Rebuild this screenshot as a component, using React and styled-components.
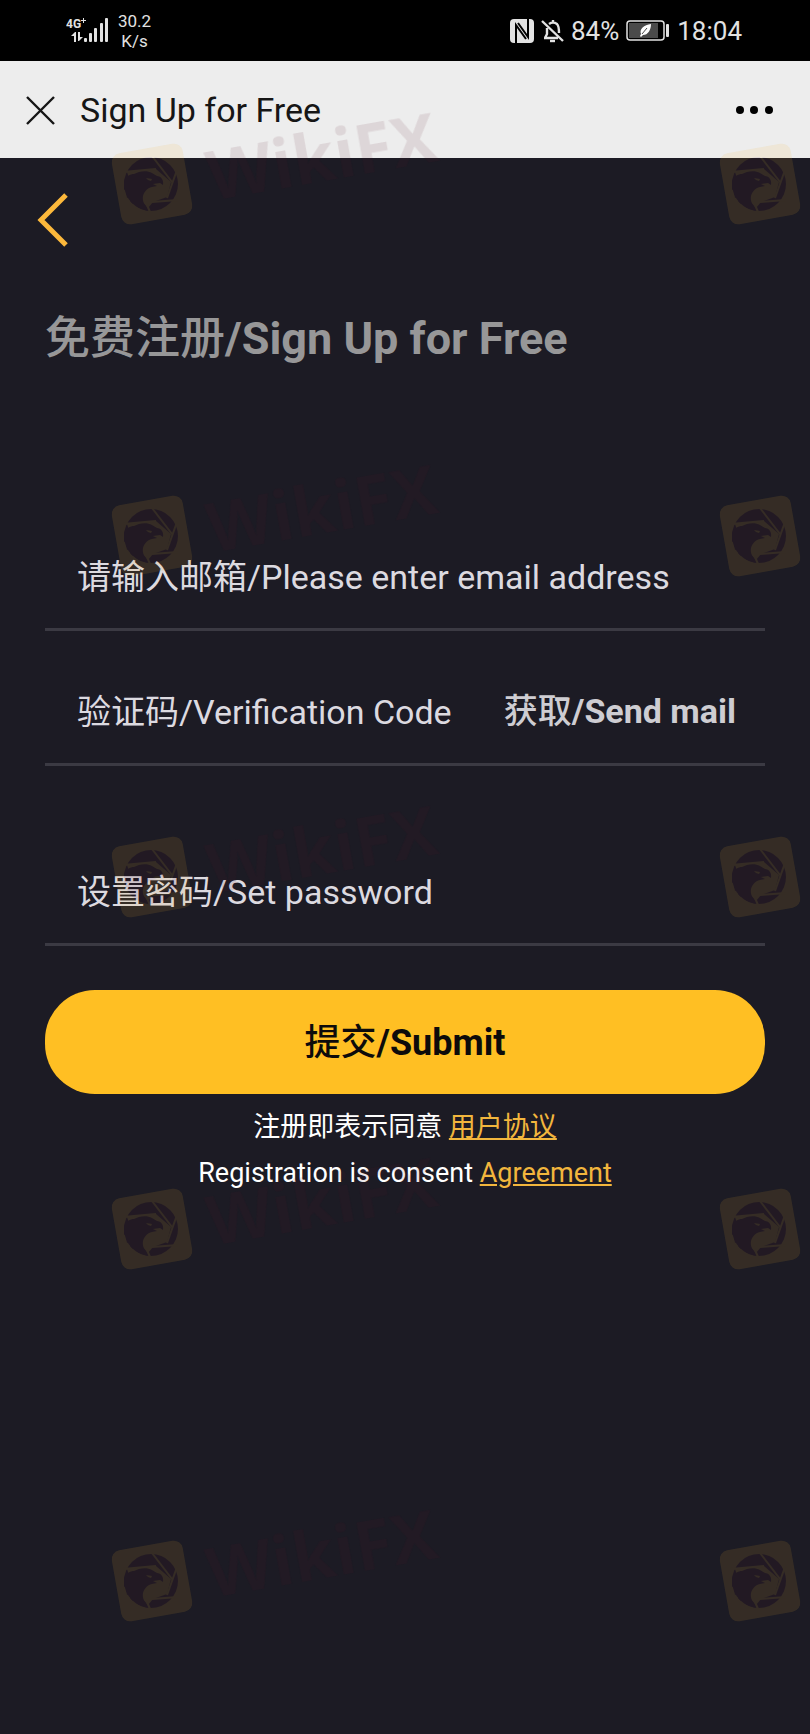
import { useState } from 'react';
import styled, { createGlobalStyle } from 'styled-components';

const GlobalStyle = createGlobalStyle`
  * { box-sizing: border-box; }
  body {
    margin: 0;
    background: #1c1b24;
    font-family: Roboto, 'Noto Sans CJK SC', sans-serif;
  }
  button, input { font-family: inherit; }
`;

const Page = styled.div`
  position: relative;
  min-height: 100vh;
  background: #1c1b24;
  overflow: hidden;
`;

const StatusBar = styled.div`
  display: flex;
  align-items: center;
  justify-content: space-between;
  height: 61px;
  padding: 0 68px 0 66px;
  background: #000;
  color: #e2e2e2;
`;

const StatusGroup = styled.div`
  display: flex;
  align-items: center;
  gap: ${props => props.$gap}px;
`;

const Speed = styled.div`
  font-size: 17px;
  line-height: 20px;
  text-align: center;
`;

const StatusText = styled.span`
  font-size: 26px;
  line-height: 32px;
`;

const TitleBar = styled.header`
  display: flex;
  align-items: center;
  gap: 24px;
  height: 97px;
  padding: 0 37px 0 24px;
  background: #ededed;
  color: #161616;
`;

const Title = styled.h1`
  flex: 1;
  margin: 0;
  font-size: 34px;
  font-weight: 400;
  line-height: 40px;
`;

const IconButton = styled.button`
  display: flex;
  padding: 0;
  border: 0;
  background: none;
  color: inherit;
  cursor: pointer;
`;

const Content = styled.main`
  padding: 32px 45px 0;
`;

const Back = styled(IconButton)`
  margin-left: -9px;
  color: #fcb83b;
`;

const Heading = styled.h2`
  margin: 59px 0 0;
  color: #979798;
  font-size: 45px;
  font-weight: 700;
  line-height: 60px;
`;

const Han = styled.span`
  font-weight: 500;
`;

const Form = styled.form`
  display: flex;
  flex-direction: column;
  margin-top: 156px;
`;

const Field = styled.div`
  display: flex;
  align-items: center;
  height: 106px;
  margin-bottom: ${props => props.$space}px;
  padding: 0 29px 0 32px;
  border-bottom: 3px solid #3b3a43;
`;

const Input = styled.input`
  flex: 1;
  min-width: 0;
  height: 100%;
  padding: 0;
  border: 0;
  outline: 0;
  background: none;
  color: #dcdae0;
  font-size: 34px;
  &::placeholder {
    color: #dcdae0;
    opacity: 1;
  }
`;

const SendMail = styled.button`
  padding: 0 0 6px;
  border: 0;
  background: none;
  color: #cecdd2;
  font-size: 34px;
  font-weight: 700;
  cursor: pointer;
`;

const Submit = styled.button`
  height: 104px;
  padding: 0 0 6px;
  border: 0;
  border-radius: 50px;
  background: #ffbf23;
  color: #0d0b0b;
  font-size: 36px;
  font-weight: 700;
  cursor: pointer;
`;

const Terms = styled.p`
  margin: 10px 0 0;
  color: #fff;
  font-size: 27px;
  line-height: 46px;
  text-align: center;
`;

const Link = styled.a`
  color: #f2b63d;
  text-decoration: underline;
`;

const WatermarkRow = styled.div`
  position: absolute;
  top: ${props => props.$top}px;
  left: 0;
  right: 0;
  display: flex;
  justify-content: space-between;
  padding: 0 9px 0 111px;
  opacity: 0.12;
  pointer-events: none;
`;

const Mark = styled.svg`
  display: block;
  overflow: visible;
  font-family: 'Open Sans', sans-serif;
  font-size: 68px;
  font-weight: 700;
`;

const watermarks = [144, 496, 837, 1189, 1541];

const Logo = ({ label }) => (
  <Mark width="82" height="82" viewBox="0 0 82 82" aria-hidden="true">
    <rect x="5" y="4" width="72" height="72" rx="9" fill="#f0b432" transform="rotate(-10 41 40)" />
    <circle cx="40" cy="40" r="27" fill="#5a1428" />
    {/* shutter blades */}
    <path d="M16 28L45 25L60 38L56 53L42 58L37 64L30 56L20 40Z" fill="#f0b432" />
    <path d="M12 28L45 25M41 12L61 38M66 26L56 54M67 56L41 58M39 68L33 54" stroke="#f0b432" strokeWidth="2" fill="none" />
    {/* eagle */}
    <path d="M13 37C15 32 19 30 23 30C28 27 36 26 41 29L46 32C50 32 53 36 52 41L49 39L42 40L46 42L41 43C36 44 33 48 32 52C31 57 34 62 37 67L31 65L29 60L28 64L25 62L25 56L22 60L19 57L21 51L16 54L15 48L18 43L13 46Z" fill="#5a1428" />
    <path d="M35 34L41 35L40 37L37 36Z" fill="#f0b432" />
    {label && <text x="97" y="67" fill="#5a1428" opacity="0.85" transform="rotate(-10 41 41)">{label}</text>}
  </Mark>
);

const Signal = () => (
  <svg width="43" height="26" viewBox="0 0 43 26" fill="#e2e2e2" aria-hidden="true">
    <text x="0" y="10" fontSize="12" fontWeight="700">4G</text>
    <path d="M17 0h1v2h2v1h-2v2h-1V3h-2V2h2z" />
    <path d="M8 24V18H5L9 14H10V24zM12 14h2v5h3l-4 4h-1z" />
    <rect x="18" y="20" width="3" height="4" rx="1" />
    <rect x="23" y="15" width="3" height="9" rx="1" />
    <rect x="28" y="10" width="3" height="14" rx="1" />
    <rect x="34" y="5" width="3" height="19" rx="1" />
    <rect x="39" y="0" width="3" height="24" rx="1" />
  </svg>
);

const Nfc = () => (
  <svg width="24" height="24" viewBox="0 0 24 24" aria-hidden="true">
    <rect width="24" height="24" rx="4" fill="#e2e2e2" />
    <path d="M6 24V6L16 20M18 0V18L8 4" fill="none" stroke="#000" strokeWidth="2" />
  </svg>
);

const BellOff = () => (
  <svg width="23" height="24" viewBox="0 0 23 24" fill="none" stroke="#e2e2e2" strokeWidth="2.400" aria-hidden="true">
    <path d="M1 2L22 22M3 19H17M4 19L6 15V9M8 5Q12 2 16 5Q18 7 18 14M12 1V3" />
    <path d="M9 22H14" />
  </svg>
);

const Battery = () => (
  <svg width="44" height="21" viewBox="0 0 44 21" aria-hidden="true">
    <rect x="1" y="1" width="37" height="19" rx="3" fill="none" stroke="#e2e2e2" strokeWidth="1.500" />
    <rect x="3" y="3" width="29" height="15" fill="#4a4a4a" />
    <path d="M15 14C13 9 18 5 25 4C25 10 22 15 17 15L15 17L14 16Z" fill="#fff" />
    <path d="M16 14L21 8" stroke="#4a4a4a" strokeWidth="1" />
    <rect x="40" y="4" width="3" height="13" rx="1" fill="#e2e2e2" />
  </svg>
);

export default function App () {
  const [form, setForm] = useState({ email: '', code: '', password: '' });

  const update = evt => setForm({ ...form, [evt.target.name]: evt.target.value });

  return (
    <Page>
      <GlobalStyle />
      <StatusBar>
        <StatusGroup $gap={9}>
          <Signal />
          <Speed>30.2<br />K/s</Speed>
        </StatusGroup>
        <StatusGroup $gap={7}>
          <Nfc />
          <BellOff />
          <StatusText>84%</StatusText>
          <Battery />
          <StatusText>18:04</StatusText>
        </StatusGroup>
      </StatusBar>
      <TitleBar>
        <IconButton type="button" aria-label="Close">
          <svg width="32" height="32" viewBox="0 0 32 32" stroke="currentColor" strokeWidth="2.400">
            <path d="M3 3L30 30M30 3L3 30" />
          </svg>
        </IconButton>
        <Title>Sign Up for Free</Title>
        <IconButton type="button" aria-label="More">
          <svg width="38" height="10" viewBox="0 0 38 10" fill="#000">
            <circle cx="5" cy="5" r="4" />
            <circle cx="19" cy="5" r="4" />
            <circle cx="34" cy="5" r="4" />
          </svg>
        </IconButton>
      </TitleBar>
      <Content>
        <Back type="button" aria-label="Back">
          <svg width="34" height="60" viewBox="0 0 34 60" fill="none" stroke="currentColor" strokeWidth="5">
            <path d="M30 5L5 30L30 55" />
          </svg>
        </Back>
        <Heading><Han>免费注册</Han>/Sign Up for Free</Heading>
        <Form onSubmit={evt => evt.preventDefault()}>
          <Field $space={29}>
            <Input type="email" name="email" aria-label="Email" placeholder="请输入邮箱/Please enter email address" value={form.email} onChange={update} />
          </Field>
          <Field $space={74}>
            <Input name="code" aria-label="Verification code" placeholder="验证码/Verification Code" value={form.code} onChange={update} />
            <SendMail type="button"><Han>获取</Han>/Send mail</SendMail>
          </Field>
          <Field $space={44}>
            <Input type="password" name="password" aria-label="Password" placeholder="设置密码/Set password" value={form.password} onChange={update} />
          </Field>
          <Submit type="submit"><Han>提交</Han>/Submit</Submit>
        </Form>
        <Terms>
          注册即表示同意 <Link href="#agreement">用户协议</Link><br />
          Registration is consent <Link href="#agreement">Agreement</Link>
        </Terms>
      </Content>
      {watermarks.map(top => (
        <WatermarkRow key={top} $top={top}>
          <Logo label="WikiFX" />
          <Logo />
        </WatermarkRow>
      ))}
    </Page>
  );
}
